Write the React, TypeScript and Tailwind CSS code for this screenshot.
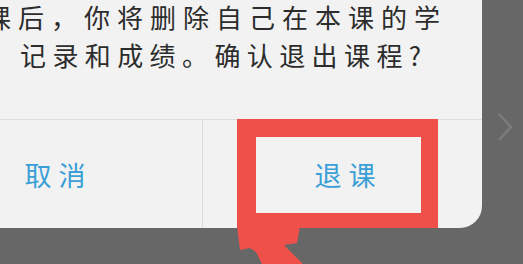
import React from "react";

export default function App() {
  const font = { fontFamily: '"Noto Sans CJK SC", "Noto Sans", sans-serif' };
  return (
    <div className="relative w-[523px] h-[264px] overflow-hidden bg-[#676767]" style={font}>
      {/* dialog */}
      <div className="ml-[-92px] w-[574px] h-[228px] bg-[#f2f2f2] rounded-br-[22px] flex flex-col">
        <div className="h-[119px] pl-[77px] pt-0 mt-[-2px] text-[26px] leading-[38px] tracking-[7px] text-[#2c2c2c] whitespace-nowrap">
          <div>课后，你将删除自己在本课的学</div>
          <div className="pl-[35px] tracking-[6.4px]">记录和成绩。确认退出课程?</div>
        </div>
        <div className="h-px mt-[2px] bg-[#dedede]" />
        <div className="flex flex-1">
          <div className="w-[294px] flex items-center justify-center pt-[2px] text-[27px] tracking-[7px] text-[#3a9fd6]">
            <span className="ml-[7px]">取消</span>
          </div>
          <div className="w-px bg-[#dcdcdc]" />
          <div className="flex-1 flex items-center justify-center pt-[2px] text-[27px] tracking-[7px] text-[#3a9fd6]">
            <span className="ml-[12px]">退课</span>
          </div>
        </div>
      </div>

      {/* chevron on background */}
      <svg className="absolute left-[496px] top-[112px]" width="18" height="30" viewBox="0 0 18 30">
        <polyline points="3,2 15,15 3,28" fill="none" stroke="#7c7c7c" strokeWidth="2.5" />
      </svg>

      {/* red highlight box */}
      <div className="absolute left-[237px] top-[119px] w-[201px] h-[109px] border-solid border-[#f0504a] border-t-[18px] border-l-[19px] border-r-[17px] border-b-[15px]" />

      {/* red arrow */}
      <svg className="absolute left-0 top-0" width="523" height="264" viewBox="0 0 523 264">
        <polygon
          points="237,226 300,226 297,243 284,245 303,264 262,264 256,252 250,248 240,250"
          fill="#f0504a"
        />
      </svg>
    </div>
  );
}
